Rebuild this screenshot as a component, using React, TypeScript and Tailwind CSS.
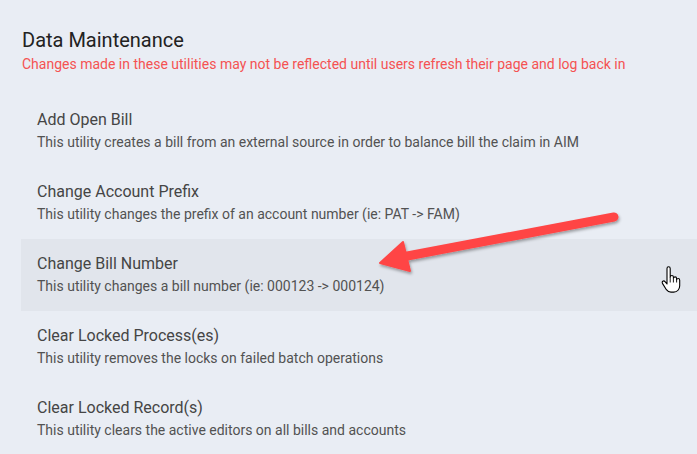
const items = [
  { title: 'Add Open Bill', desc: 'This utility creates a bill from an external source in order to balance bill the claim in AIM' },
  { title: 'Change Account Prefix', desc: 'This utility changes the prefix of an account number (ie: PAT -> FAM)' },
  { title: 'Change Bill Number', desc: 'This utility changes a bill number (ie: 000123 -> 000124)', hover: true },
  { title: 'Clear Locked Process(es)', desc: 'This utility removes the locks on failed batch operations' },
  { title: 'Clear Locked Record(s)', desc: 'This utility clears the active editors on all bills and accounts' },
];

function HandCursor() {
  return (
    <svg width="20" height="28" viewBox="0 0 20 28" className="absolute left-[661px] top-[266px]" aria-hidden>
      <path
        d="M6 2.5c0-1 .7-1.7 1.6-1.7s1.6.7 1.6 1.7V11c.2-1 .9-1.5 1.7-1.5s1.5.6 1.5 1.6v1.2c.2-.9.9-1.4 1.7-1.4s1.5.6 1.5 1.6v1.2c.2-.8.9-1.2 1.6-1.2.9 0 1.5.7 1.5 1.7v5.5c0 3.6-2.4 6.4-6 6.4H10c-2.1 0-3.4-.8-4.6-2.4L1.6 17.6c-.6-.8-.5-1.8.2-2.3.7-.5 1.6-.4 2.2.3L6 18V2.5z"
        fill="#fff"
        stroke="#000"
        strokeWidth="1.1"
        strokeLinejoin="round"
      />
      <path d="M9.2 11v5.5M12.4 12.4v4.1M15.6 13.4v3.1" stroke="#000" strokeWidth="0.9" />
    </svg>
  );
}

function Arrow() {
  return (
    <svg width="697" height="454" className="pointer-events-none absolute left-0 top-0" aria-hidden>
      <defs>
        <filter id="sh" x="-20%" y="-50%" width="140%" height="200%">
          <feDropShadow dx="1" dy="2" stdDeviation="1.6" floodColor="#000" floodOpacity="0.35" />
        </filter>
      </defs>
      <g filter="url(#sh)">
        <line x1="614" y1="217" x2="402" y2="257" stroke="#ff4545" strokeWidth="9" strokeLinecap="round" />
        <path d="M380 263 L403 242 L410 271 Z" fill="#ff4545" stroke="#ff4545" strokeWidth="2" strokeLinejoin="round" />
      </g>
    </svg>
  );
}

export default function App() {
  return (
    <div className="relative h-[454px] w-[697px] overflow-hidden bg-[#e9edf4] font-['Roboto',sans-serif]">
      <div className="pl-[22px] pt-[26px]">
        <h1 className="text-[20px] leading-[28px] text-[#222222]">Data Maintenance</h1>
        <p className="mt-[1px] text-[14px] leading-[18px] text-[#f55252]">
          Changes made in these utilities may not be reflected until users refresh their page and log back in
        </p>
      </div>
      <ul className="ml-[21px] mt-[22px]">
        {items.map((it) => (
          <li
            key={it.title}
            className={`flex h-[72px] flex-col pl-[16px] pt-[14px] ${it.hover ? 'bg-[#e1e5ec]' : ''}`}
          >
            <span className="text-[16px] leading-[22px] text-[#454545]">{it.title}</span>
            <span className="mt-[2px] text-[14px] leading-[18px] text-[#525252]">{it.desc}</span>
          </li>
        ))}
      </ul>
      <Arrow />
      <HandCursor />
    </div>
  );
}
